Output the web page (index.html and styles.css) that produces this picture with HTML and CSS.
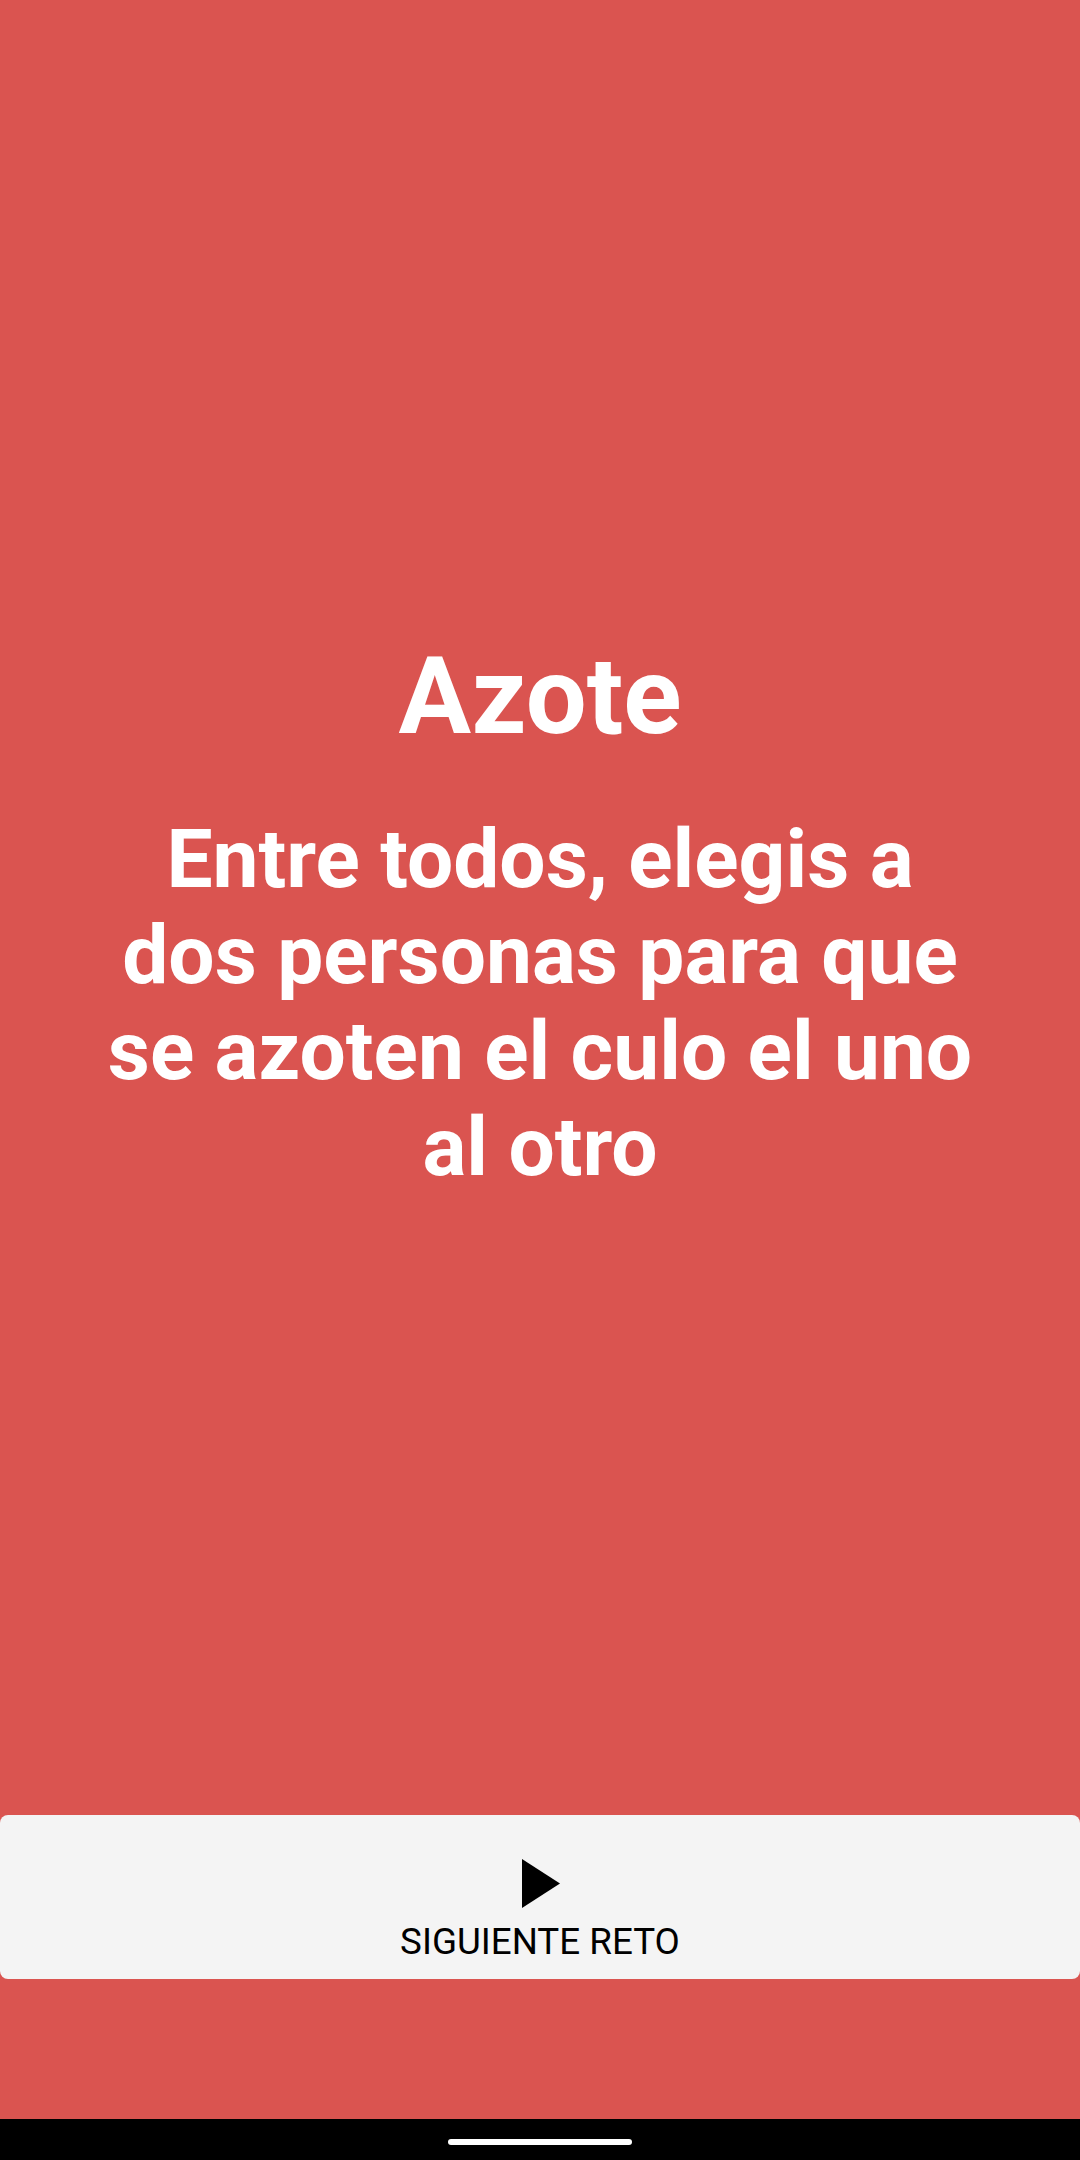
FILE: index.html
```html
<!DOCTYPE html>
<html lang="es">
<head>
<meta charset="utf-8">
<title>Azote</title>
<link rel="stylesheet" href="styles.css">
</head>
<body>
<div class="screen">
  <main class="content">
    <h1 class="title">Azote</h1>
    <p class="text">Entre todos, elegis a dos personas para que se azoten el culo el uno al otro</p>
  </main>
  <button class="next" type="button">
    <svg class="play" width="38" height="49" viewBox="0 0 38 49" aria-hidden="true"><polygon points="0,0 38,24.5 0,49" fill="#000"/></svg>
    <span class="label">SIGUIENTE RETO</span>
  </button>
  <div class="spacer"></div>
  <div class="navbar"><span class="pill"></span></div>
</div>
</body>
</html>
```

FILE: styles.css
```css
html, body {
  margin: 0;
  padding: 0;
}
body {
  background: #da5450;
  font-family: Roboto, "Liberation Sans", sans-serif;
}
.screen {
  width: 1080px;
  height: 2160px;
  display: flex;
  flex-direction: column;
}
.content {
  flex: 1;
  display: flex;
  flex-direction: column;
  align-items: center;
  justify-content: center;
  padding-top: 12px;
}
.title {
  margin: 0;
  color: #fff;
  font-size: 108px;
  font-weight: 700;
  line-height: normal;
}
.text {
  margin: 52px 0 0;
  width: 890px;
  color: #fff;
  font-size: 82px;
  font-weight: 700;
  line-height: 96px;
  text-align: center;
}
.next {
  height: 164px;
  flex: none;
  margin: 0;
  border: none;
  border-radius: 8px;
  background: #f4f4f4;
  display: flex;
  flex-direction: column;
  align-items: center;
  padding: 44px 0 0;
  box-sizing: border-box;
  font-family: Roboto, "Liberation Sans", sans-serif;
}
.play {
  display: block;
  margin-left: 2px;
}
.label {
  margin-top: 12px;
  font-size: 36.75px;
  line-height: 43px;
  color: #000;
  font-weight: 400;
}
.spacer {
  height: 140px;
  flex: none;
}
.navbar {
  height: 41px;
  flex: none;
  background: #000;
  display: flex;
  justify-content: center;
  align-items: flex-start;
}
.pill {
  margin-top: 20px;
  width: 184px;
  height: 6px;
  border-radius: 3px;
  background: #fff;
}
```
